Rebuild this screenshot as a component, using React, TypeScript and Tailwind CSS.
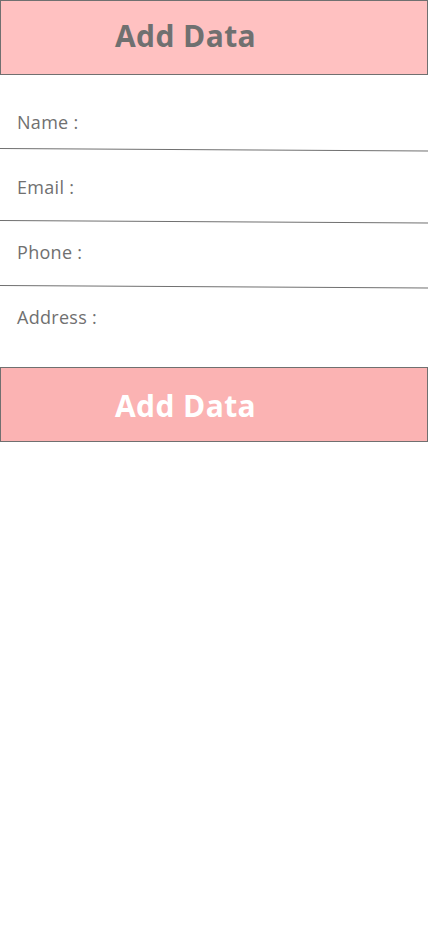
import { useState } from "react";

function SlantLine() {
  return (
    <svg className="block w-full h-[6px]" viewBox="0 0 428 6" preserveAspectRatio="none">
      <line x1="0" y1="1.5" x2="428" y2="4" stroke="#707070" strokeWidth="1" />
    </svg>
  );
}

export default function App() {
  const [fields] = useState(["Name :", "Email :", "Phone :", "Address :"]);

  return (
    <div className="w-[428px] min-h-[926px] bg-white font-['Open_Sans','Noto_Sans',sans-serif]">
      {/* Header */}
      <div className="h-[75px] bg-[#ffc1c1] border border-[#707070] flex items-center pl-[114px] pb-[3px]">
        <h1 className="text-[30px] leading-none font-bold text-[#707070] tracking-[0.4px]">Add Data</h1>
      </div>

      {/* Form fields */}
      <div className="pt-[35px]">
        <div className="pl-[17px] text-[18px] leading-[24px] text-[#707070] tracking-[0.3px]">{fields[0]}</div>
        <div className="mt-[13px]"><SlantLine /></div>
        <div className="mt-[22px] pl-[17px] text-[18px] leading-[24px] text-[#707070] tracking-[0.3px]">{fields[1]}</div>
        <div className="mt-[20px]"><SlantLine /></div>
        <div className="mt-[15px] pl-[17px] text-[18px] leading-[24px] text-[#707070] tracking-[0.3px]">{fields[2]}</div>
        <div className="mt-[20px]"><SlantLine /></div>
        <div className="mt-[15px] pl-[17px] text-[18px] leading-[24px] text-[#707070] tracking-[0.3px]">{fields[3]}</div>
      </div>

      {/* Submit button */}
      <button className="mt-[38px] w-full h-[75px] bg-[#fbb3b3] border border-[#707070] flex items-center pl-[114px] pt-[2px]">
        <span className="text-[30px] leading-none font-bold text-white tracking-[0.4px]">Add Data</span>
      </button>
    </div>
  );
}
